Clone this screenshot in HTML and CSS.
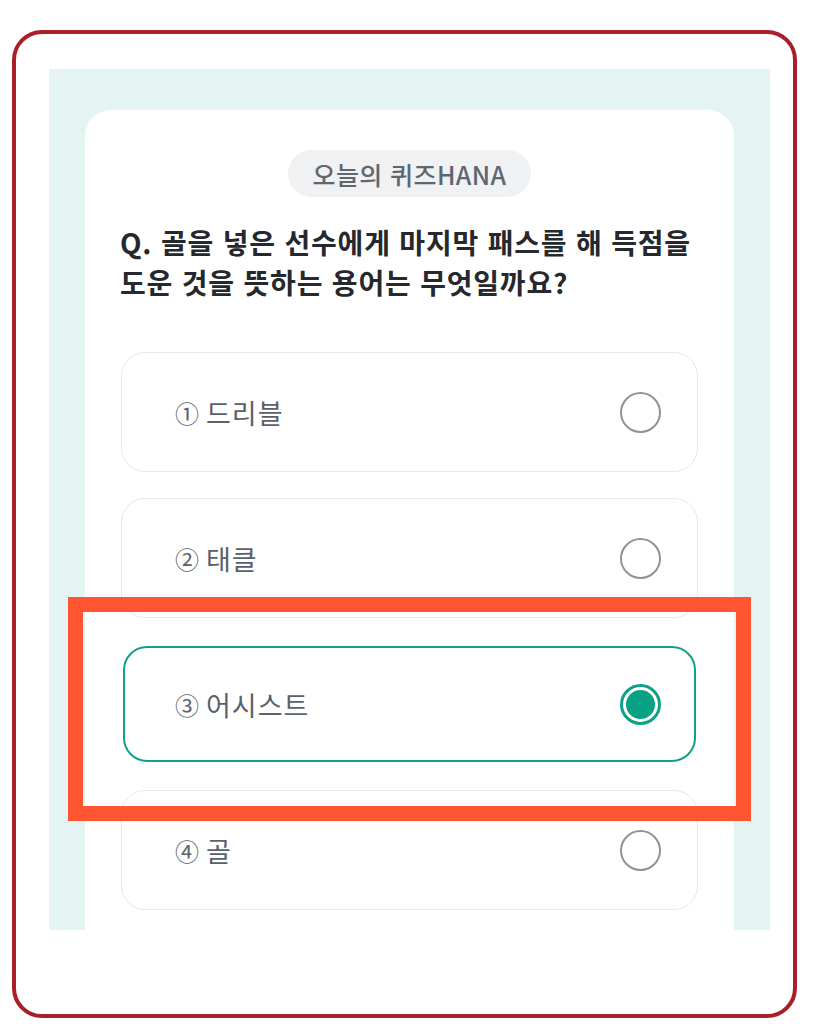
FILE: index.html
```html
<!DOCTYPE html>
<html lang="ko">
<head>
<meta charset="utf-8">
<title>오늘의 퀴즈HANA</title>
<link rel="stylesheet" href="styles.css">
</head>
<body>
<div class="frame">
  <div class="mint">
    <div class="card">
      <div class="badge-row"><span class="badge">오늘의 퀴즈HANA</span></div>
      <p class="question">Q. 골을 넣은 선수에게 마지막 패스를 해 득점을 도운 것을 뜻하는 용어는 무엇일까요?</p>
      <div class="options">
        <div class="option"><span class="label"><span class="num">①</span> 드리블</span><span class="radio"></span></div>
        <div class="option"><span class="label"><span class="num">②</span> 태클</span><span class="radio"></span></div>
        <div class="option selected"><span class="label"><span class="num">③</span> 어시스트</span><span class="radio on"><span class="dot"></span></span></div>
        <div class="option"><span class="label"><span class="num">④</span> 골</span><span class="radio"></span></div>
      </div>
    </div>
  </div>
</div>
<div class="highlight"></div>
</body>
</html>
```
FILE: styles.css
```css
* { box-sizing: border-box; }
html, body { margin: 0; padding: 0; background: #fff; }
body {
  font-family: "Noto Sans CJK KR", "Noto Sans", sans-serif;
  position: relative;
  width: 819px;
  height: 1024px;
  overflow: hidden;
}
.frame {
  margin: 30px 0 0 12px;
  width: 785px;
  height: 988px;
  border: 4px solid #a81f29;
  border-radius: 30px;
  padding: 35px 0 0 33px;
}
.mint {
  width: 721px;
  height: 861px;
  background: #e3f4f2;
  padding: 41px 36px 0 36px;
  overflow: hidden;
}
.card {
  background: #fff;
  border-radius: 26px 26px 0 0;
  padding: 40px 36px 60px 36px;
  min-height: 900px;
}
.badge-row { display: flex; justify-content: center; }
.badge {
  display: inline-flex;
  align-items: center;
  justify-content: center;
  width: 243px;
  height: 47px;
  border-radius: 24px;
  background: #eff1f3;
  color: #5f6670;
  font-size: 25px;
  font-weight: 500;
  letter-spacing: 0.4px;
}
.question {
  margin: 25px 0 0 -1px;
  font-size: 28px;
  line-height: 40px;
  font-weight: 700;
  color: #25282c;
  letter-spacing: 0.8px;
}
.options {
  margin-top: 50px;
  display: flex;
  flex-direction: column;
  gap: 26px;
}
.option {
  height: 120px;
  border: 1px solid #e6e8ea;
  border-radius: 24px;
  display: flex;
  align-items: center;
  justify-content: space-between;
  padding: 0 36px 0 53px;
}
.option.selected {
  height: 116px;
  margin: 2px 2px;
  border: 2px solid #13a08b;
  padding: 0 33px 0 50px;
}
.label {
  color: #5a616a;
  font-size: 27px;
  letter-spacing: 1px;
  display: flex;
  align-items: center;
  gap: 6px;
}
.num { font-size: 24px; }
.radio {
  width: 41px;
  height: 41px;
  border-radius: 50%;
  border: 2.5px solid #8e939a;
  display: flex;
  align-items: center;
  justify-content: center;
}
.radio.on { border: 3px solid #0ea186; }
.dot {
  width: 29px;
  height: 29px;
  border-radius: 50%;
  background: #08a184;
}
.highlight {
  position: absolute;
  left: 68px;
  top: 597px;
  width: 683px;
  height: 224px;
  border: 15px solid #ff5533;
}
```
